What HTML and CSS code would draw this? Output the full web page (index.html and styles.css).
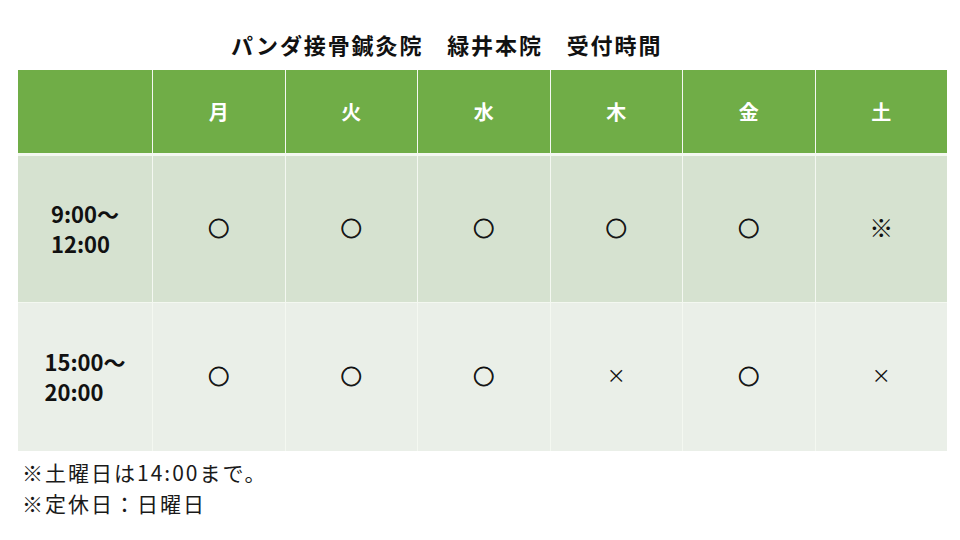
FILE: index.html
```html
<!DOCTYPE html>
<html lang="ja">
<head>
<meta charset="utf-8">
<link rel="stylesheet" href="styles.css">
</head>
<body>
<div class="page">
  <h1 class="title">パンダ接骨鍼灸院　緑井本院　受付時間</h1>
  <div class="table">
    <div class="row head">
      <div class="cell"></div>
      <div class="cell">月</div>
      <div class="cell">火</div>
      <div class="cell">水</div>
      <div class="cell">木</div>
      <div class="cell">金</div>
      <div class="cell">土</div>
    </div>
    <div class="row band1">
      <div class="cell time"><span>9:00～<br>12:00</span></div>
      <div class="cell mark">○</div>
      <div class="cell mark">○</div>
      <div class="cell mark">○</div>
      <div class="cell mark">○</div>
      <div class="cell mark">○</div>
      <div class="cell mark note">※</div>
    </div>
    <div class="row band2">
      <div class="cell time"><span>15:00～<br>20:00</span></div>
      <div class="cell mark">○</div>
      <div class="cell mark">○</div>
      <div class="cell mark">○</div>
      <div class="cell mark cross">×</div>
      <div class="cell mark">○</div>
      <div class="cell mark cross">×</div>
    </div>
  </div>
  <div class="notes">
    <p>※土曜日は14:00まで。</p>
    <p>※定休日：日曜日</p>
  </div>
</div>
</body>
</html>
```

FILE: styles.css
```css
html, body {
  margin: 0;
  padding: 0;
  background: #ffffff;
}
body {
  width: 960px;
  height: 540px;
  overflow: hidden;
  font-family: "Noto Sans CJK JP", "Noto Sans", sans-serif;
  color: #111;
}
.page {
  padding: 0 0 0 18px;
}
.title {
  margin: 0;
  height: 70px;
  box-sizing: border-box;
  padding: 29px 0 0 213px;
  font-size: 22px;
  line-height: 30px;
  font-weight: 700;
  letter-spacing: 1.9px;
  color: #111;
}
.table {
  width: 929px;
  display: flex;
  flex-direction: column;
  background: #f4f8f1;
}
.row {
  display: grid;
  grid-template-columns: 134px repeat(6, 1fr);
  column-gap: 1px;
}
.head {
  height: 83px;
  margin-bottom: 3px;
}
.band1 {
  height: 146px;
  margin-bottom: 1px;
}
.band2 {
  height: 148px;
}
.cell {
  display: flex;
  align-items: center;
  justify-content: center;
}
.head .cell {
  background: #70ad47;
  color: #ffffff;
  font-size: 20px;
  font-weight: 700;
}
.band1 .cell {
  background: #d6e2d0;
}
.band2 .cell {
  background: #eaefe8;
}
.time span {
  display: inline-block;
  font-size: 22px;
  font-weight: 700;
  line-height: 30px;
  text-align: left;
  color: #111;
  margin-top: -2px;
}
.mark {
  font-size: 21px;
  font-weight: 700;
  -webkit-text-stroke: 0.8px #111;
  padding-bottom: 5px;
  box-sizing: border-box;
}
.mark.note {
  font-weight: 400;
  font-size: 24px;
  -webkit-text-stroke: 0;
}
.mark.cross {
  font-weight: 400;
  font-size: 19px;
  -webkit-text-stroke: 0;
}
.notes {
  padding: 6px 0 0 4px;
}
.notes p {
  margin: 0;
  font-size: 21px;
  line-height: 31px;
  letter-spacing: 2px;
  color: #1a1a1a;
}
```
